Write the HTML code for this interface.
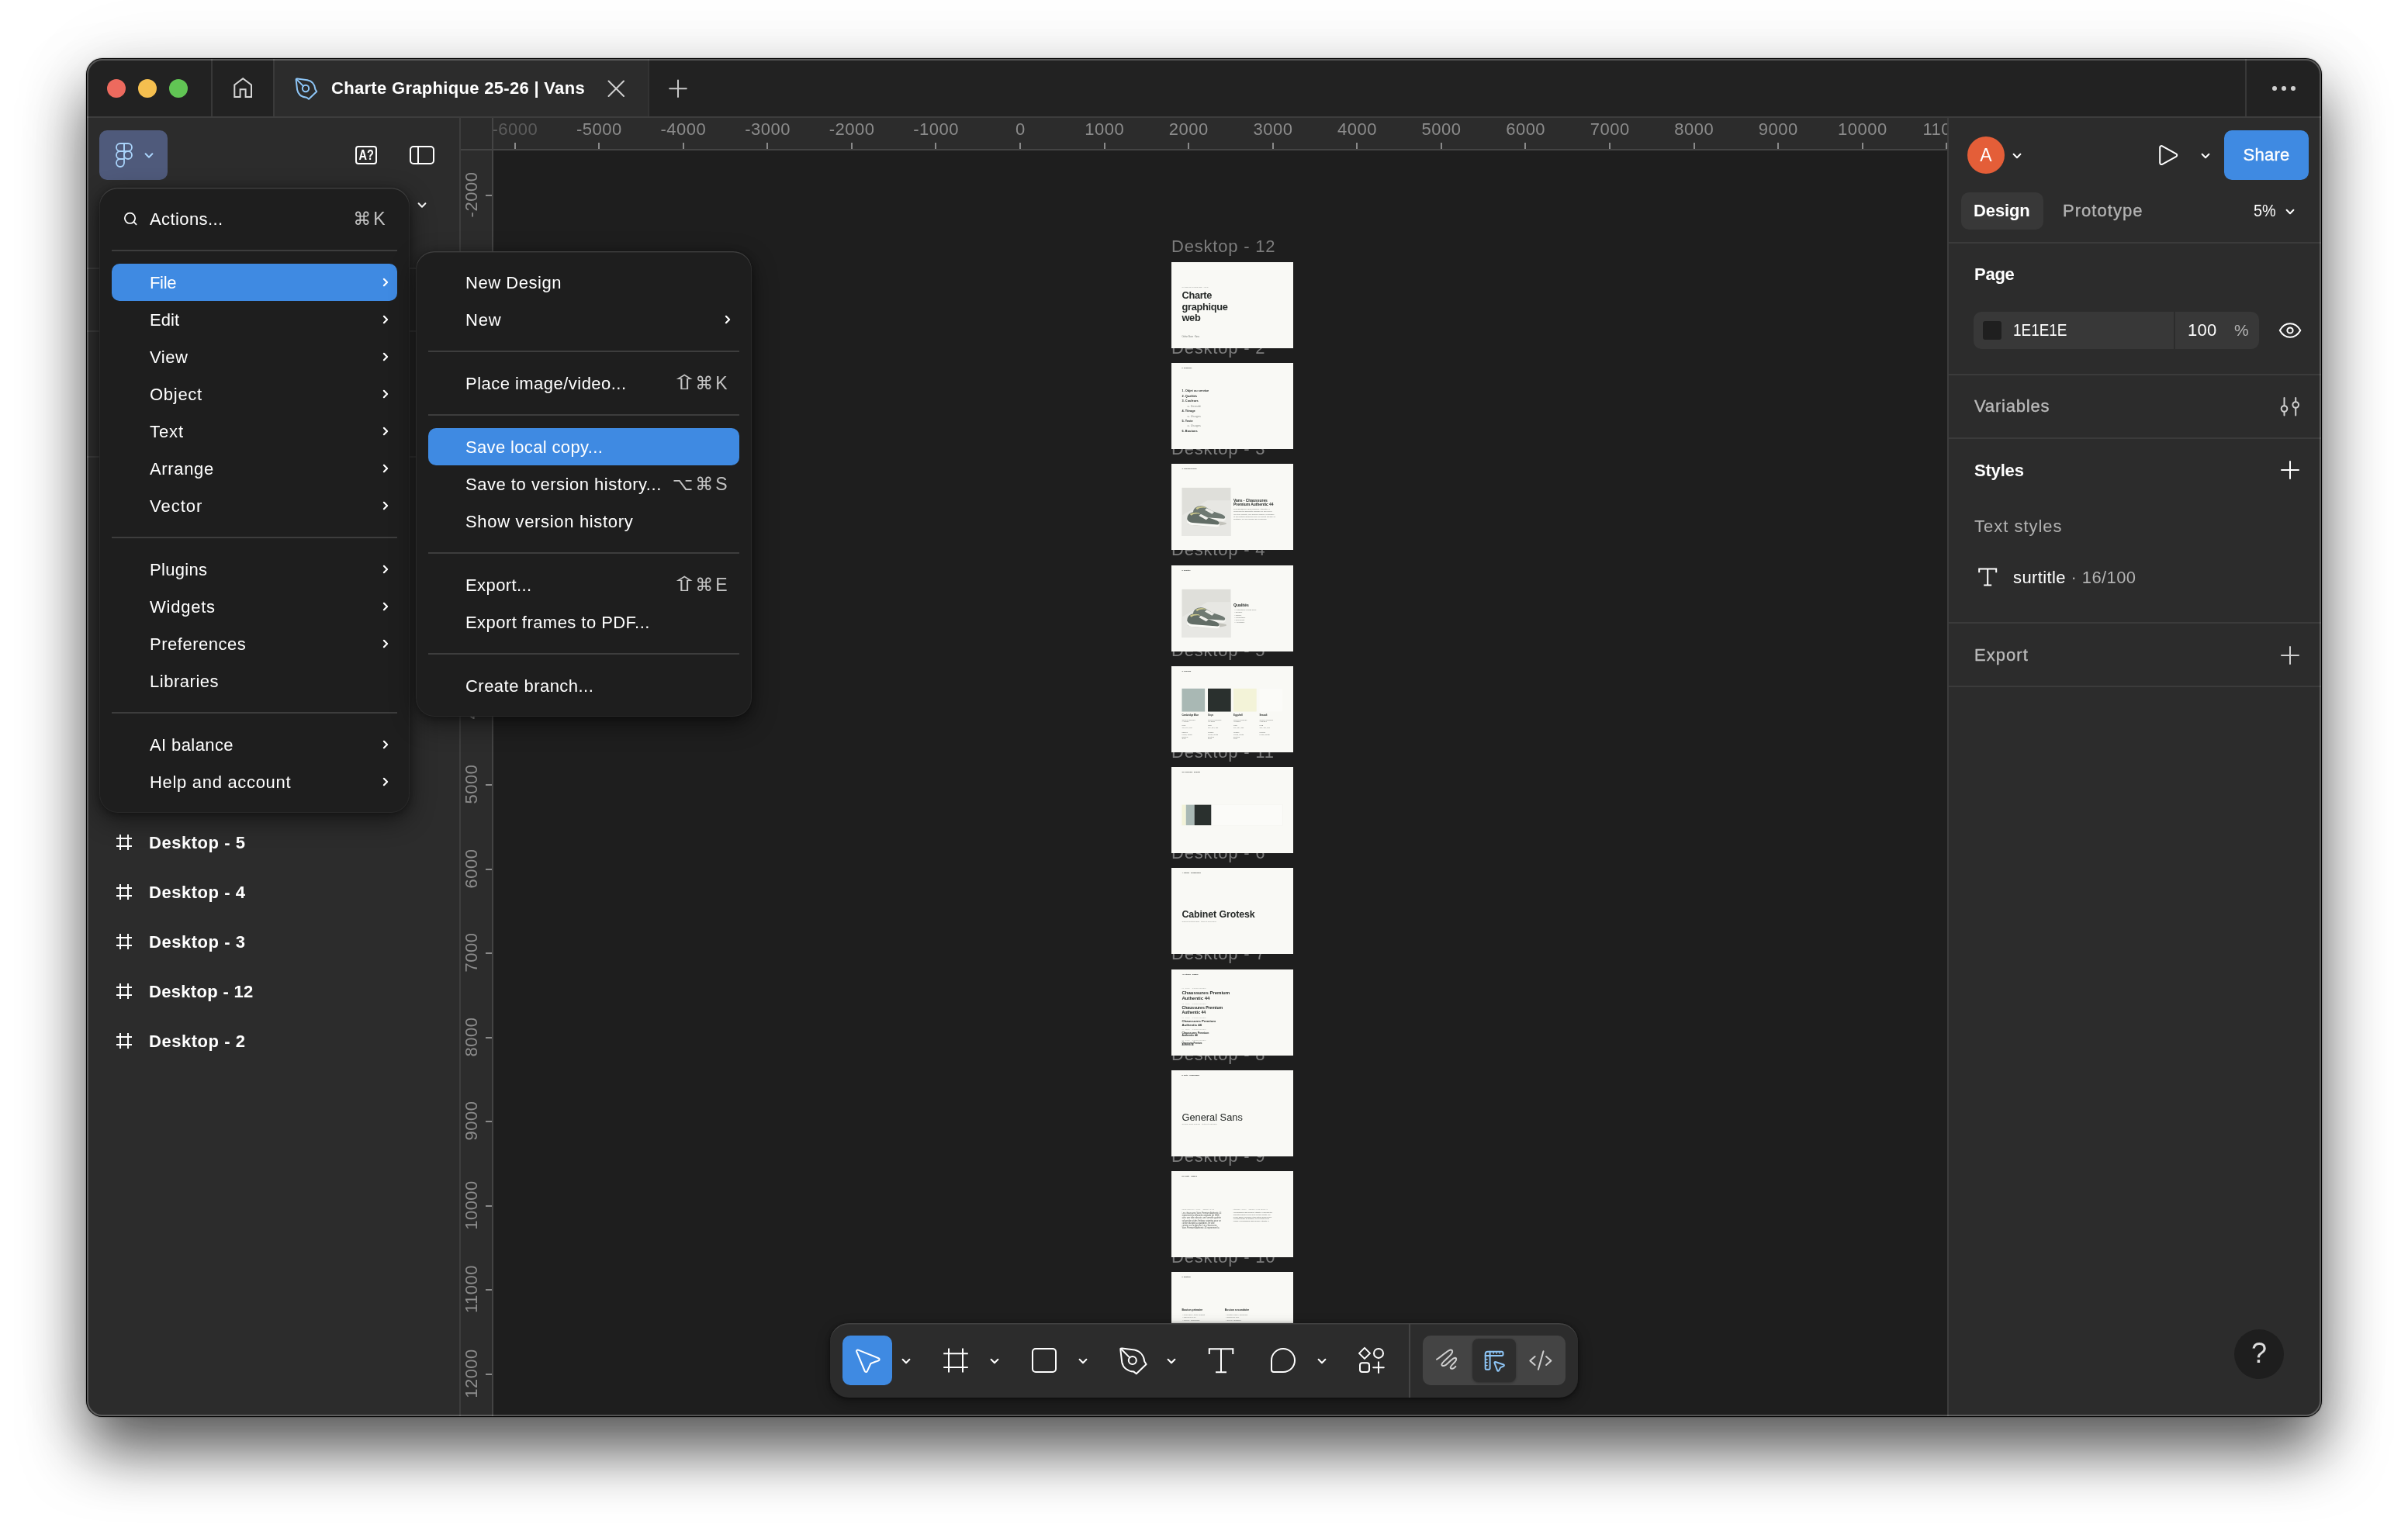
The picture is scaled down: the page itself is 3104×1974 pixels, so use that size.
<!DOCTYPE html>
<html lang="en">
<head>
<meta charset="utf-8">
<title>Charte Graphique 25-26 | Vans – Figma</title>
<style>
*{box-sizing:border-box;margin:0;padding:0}
html,body{width:3104px;height:1974px;overflow:hidden;background:#fff}
body{font-family:"Liberation Sans",sans-serif;font-size:22px;color:#fff;position:relative;-webkit-font-smoothing:antialiased}
.abs,.abs>*{position:absolute}
#shadow{position:absolute;left:111px;top:75px;width:2882px;height:1752px;border-radius:21px;
 box-shadow:0 0 2px rgba(0,0,0,.5),0 44px 78px rgba(0,0,0,.64),0 4px 110px rgba(0,0,0,.07);background:#000}
#win{position:absolute;left:112px;top:76px;width:2880px;height:1750px;border-radius:20px;overflow:hidden;background:#1e1e1e;will-change:transform}
#w{position:absolute;left:-112px;top:-76px;width:3104px;height:1974px}
#w div,#w span,#w svg{position:absolute}
#rim{position:absolute;left:112px;top:76px;width:2880px;height:1750px;border-radius:20px;border:2px solid rgba(255,255,255,.24);pointer-events:none}
.t{white-space:nowrap;line-height:26px;height:26px;letter-spacing:.5px}
.b{font-weight:bold;letter-spacing:.3px}
.g{color:#b3b3b3}
.ln{background:#3d3d3d}

#w i{position:absolute;background:#8a8a8a}
#hr i{top:32px;width:2px;height:8px}
#vr i{left:32px;width:8px;height:2px}
.rl{width:120px;text-align:center;top:2.5px;font-size:22px;line-height:24px;letter-spacing:.5px;color:#8c8c8c;white-space:nowrap;padding-left:.5px}
.rv{left:-46.5px;width:120px;height:24px;text-align:center;font-size:22px;line-height:24px;letter-spacing:.5px;color:#8c8c8c;white-space:nowrap;transform:rotate(-90deg);margin-top:-1px}

.menu{background:#1e1e1e;border-radius:24px;box-shadow:inset 0 1.5px 0 rgba(255,255,255,.11),inset 0 0 0 1px rgba(255,255,255,.05),0 10px 32px rgba(0,0,0,.45),0 2px 10px rgba(0,0,0,.35)}
.sep{height:2px;background:#3d3d3d}
.hl{height:48px;border-radius:10px;background:#3f8ae2}
.sc{text-align:right;color:#c4c4c4;font-family:"Liberation Sans","DejaVu Sans",sans-serif;letter-spacing:3px;font-size:23px}
.fl{color:#7d7d7d;letter-spacing:.8px}
.fr{width:156.4px;height:111.2px;background:#f9f9f5;overflow:hidden}
.fi{left:0;top:0;width:1440px;height:1024px;transform:scale(.10861);transform-origin:0 0}
.s{white-space:nowrap}
#w .u{position:relative;display:inline-block;width:20px;text-align:center;transform:scale(1.8,1.12);letter-spacing:0;margin-right:4px;top:-1px}
svg{overflow:visible}
.ic{fill:none;stroke:#fff;stroke-width:2;stroke-linecap:round;stroke-linejoin:round}
</style>
</head>
<body>
<div id="shadow"></div>
<div id="win"><div id="w">

<!-- ============ TITLE BAR ============ -->
<div id="titlebar" style="left:112px;top:76px;width:2880px;height:76px;background:#222"></div>
<div class="ln" style="left:112px;top:150px;width:2880px;height:2px"></div>

<div style="left:138px;top:102px;width:24px;height:24px;border-radius:50%;background:#ed6a5e"></div>
<div style="left:178px;top:102px;width:24px;height:24px;border-radius:50%;background:#f5bf4f"></div>
<div style="left:218px;top:102px;width:24px;height:24px;border-radius:50%;background:#61c554"></div>
<div class="ln" style="left:272px;top:76px;width:2px;height:74px;background:#383838"></div>
<svg style="left:293px;top:94px" width="40" height="40" viewBox="293 94 40 40"><path class="ic" stroke="#d6d6d6" d="M302.3 125V109.4L313.2 101.2L324 109.4V125H316.6V115.2H309.6V125Z" style="stroke:#d6d6d6;stroke-linejoin:miter"/></svg>
<div class="ln" style="left:352px;top:76px;width:2px;height:74px;background:#3a3a3a"></div>
<div style="left:354px;top:76px;width:482px;height:74px;background:#2c2c2c"></div>
<div style="left:354px;top:150px;width:482px;height:2px;background:#3d3d3d"></div>
<div class="ln" style="left:835px;top:76px;width:2px;height:74px;background:#333"></div>
<svg style="left:374px;top:94px" width="40" height="40" viewBox="374 94 40 40"><g class="ic" style="stroke:#8ec6f7;stroke-width:2.5" transform="translate(394 114) scale(.8) translate(-1459.8 -1754)"><path d="M1446.4 1738.5L1462.5 1740.6C1469.5 1742 1474.5 1747.5 1475.3 1755.5L1477.6 1759L1464.8 1771.2L1461.5 1768.6C1453 1768 1447.5 1763 1446.2 1756.2L1444.4 1740.6Q1444 1738.2 1446.4 1738.5Z"/><circle cx="1459.8" cy="1754" r="5.2"/><path d="M1444.6 1738.8L1456.2 1750.4"/></g></svg>
<div class="t b" style="left:427px;top:101px;letter-spacing:0.31px">Charte Graphique 25-26 | Vans</div>
<svg style="left:774px;top:94px" width="40" height="40" viewBox="774 94 40 40"><path class="ic" style="stroke:#d0d0d0" d="M784.5 104.5L804 124M804 104.5L784.5 124"/></svg>
<svg style="left:854px;top:94px" width="40" height="40" viewBox="854 94 40 40"><path class="ic" style="stroke:#c8c8c8" d="M874 103.5V125M863.2 114.2H884.8"/></svg>
<div class="ln" style="left:2894px;top:76px;width:2px;height:74px;background:#383838"></div>
<div style="left:2929px;top:111px;width:6px;height:6px;border-radius:50%;background:#d0d0d0"></div>
<div style="left:2941px;top:111px;width:6px;height:6px;border-radius:50%;background:#d0d0d0"></div>
<div style="left:2953px;top:111px;width:6px;height:6px;border-radius:50%;background:#d0d0d0"></div>
<!--TITLEBAR-->

<!-- ============ LEFT PANEL ============ -->
<div id="left" style="left:112px;top:152px;width:480px;height:1674px;background:#2c2c2c"></div>
<div class="ln" style="left:592px;top:152px;width:2px;height:1674px"></div>

<div style="left:128px;top:168px;width:88px;height:64px;border-radius:10px;background:#4f5a7b"></div>
<svg style="left:140px;top:180px" width="40" height="40" viewBox="140 180 40 40"><g class="ic" style="stroke:#a9d3fa;stroke-width:1.8"><path d="M160 185H155a5 5 0 0 0 0 10H160Z"/><path d="M160 185H165a5 5 0 0 1 0 10H160Z"/><path d="M160 195H155a5 5 0 0 0 0 10H160Z"/><circle cx="165" cy="200" r="5"/><path d="M160 205H155a5 5 0 1 0 5 5Z"/></g></svg>
<svg style="left:182px;top:190px" width="20" height="20" viewBox="182 190 20 20"><path class="ic" style="stroke:#a9d3fa" d="M187.6 198.3L192 202.7L196.4 198.3"/></svg>
<svg style="left:452px;top:180px" width="40" height="40" viewBox="452 180 40 40"><rect class="ic" x="459" y="189" width="26" height="22" rx="3"/><text x="472.2" y="205.5" transform="translate(0 206.2) scale(1 1.22) translate(0 -205.5)" text-anchor="middle" font-family="Liberation Sans, sans-serif" font-weight="bold" font-size="14.5" fill="#fff">A?</text></svg>
<svg style="left:524px;top:180px" width="40" height="40" viewBox="524 180 40 40"><rect class="ic" x="529" y="189" width="30" height="22" rx="4"/><path class="ic" d="M539 189V211"/></svg>
<svg style="left:534px;top:254px" width="20" height="20" viewBox="534 254 20 20"><path class="ic" d="M539.6 262.3L544 266.7L548.4 262.3"/></svg>
<div class="ln" style="left:112px;top:345px;width:480px;height:2px;background:#3b3b3b"></div>
<div class="ln" style="left:112px;top:426px;width:480px;height:2px;background:#3b3b3b"></div>
<div class="ln" style="left:112px;top:588px;width:480px;height:2px;background:#3b3b3b"></div>
<svg style="left:148px;top:1074px" width="24" height="24" viewBox="0 0 24 24"><path class="ic" style="stroke-linecap:butt" d="M7 2V22M17 2V22M2 7H22M2 17H22"/></svg>
<div class="t b" style="left:192px;top:1074px;letter-spacing:0.53px">Desktop - 5</div>
<svg style="left:148px;top:1138px" width="24" height="24" viewBox="0 0 24 24"><path class="ic" style="stroke-linecap:butt" d="M7 2V22M17 2V22M2 7H22M2 17H22"/></svg>
<div class="t b" style="left:192px;top:1138px;letter-spacing:0.53px">Desktop - 4</div>
<svg style="left:148px;top:1202px" width="24" height="24" viewBox="0 0 24 24"><path class="ic" style="stroke-linecap:butt" d="M7 2V22M17 2V22M2 7H22M2 17H22"/></svg>
<div class="t b" style="left:192px;top:1202px;letter-spacing:0.53px">Desktop - 3</div>
<svg style="left:148px;top:1266px" width="24" height="24" viewBox="0 0 24 24"><path class="ic" style="stroke-linecap:butt" d="M7 2V22M17 2V22M2 7H22M2 17H22"/></svg>
<div class="t b" style="left:192px;top:1266px;letter-spacing:0.32px">Desktop - 12</div>
<svg style="left:148px;top:1330px" width="24" height="24" viewBox="0 0 24 24"><path class="ic" style="stroke-linecap:butt" d="M7 2V22M17 2V22M2 7H22M2 17H22"/></svg>
<div class="t b" style="left:192px;top:1330px;letter-spacing:0.53px">Desktop - 2</div>
<!--LEFT-->

<!-- ============ CANVAS ============ -->
<div id="canvas" style="left:636px;top:194px;width:1874px;height:1632px;background:#1e1e1e;overflow:hidden"><div id="cv" style="left:-636px;top:-194px;width:3104px;height:1974px">
<!--CANVAS_START-->
<div class="t fl" style="left:1510px;top:305.4px">Desktop - 12</div>
<div class="t fl" style="left:1510px;top:435.6px">Desktop - 2</div>
<div class="t fl" style="left:1510px;top:565.9px">Desktop - 3</div>
<div class="t fl" style="left:1510px;top:696.1px">Desktop - 4</div>
<div class="t fl" style="left:1510px;top:826.4px">Desktop - 5</div>
<div class="t fl" style="left:1510px;top:956.6px">Desktop - 11</div>
<div class="t fl" style="left:1510px;top:1086.8px">Desktop - 6</div>
<div class="t fl" style="left:1510px;top:1217.1px">Desktop - 7</div>
<div class="t fl" style="left:1510px;top:1347.3px">Desktop - 8</div>
<div class="t fl" style="left:1510px;top:1477.6px">Desktop - 9</div>
<div class="t fl" style="left:1510px;top:1607.8px">Desktop - 10</div>
<div class="fr" style="left:1510.2px;top:337.8px"><div class="fi"><div class="s" style="left:124px;top:291px;font-size:16px;line-height:19px;font-weight:normal;color:#8a8d8a;letter-spacing:1.5px;">CHARTE GRAPHIQUE WEB — 25-26</div><div class="s" style="left:124px;top:328px;font-size:118px;line-height:132px;font-weight:bold;letter-spacing:-3px;color:#262a28;white-space:normal;width:700px">Charte<br>graphique<br>web</div><div class="s" style="left:124px;top:873px;font-size:24px;line-height:29px;font-weight:normal;color:#6d716e;letter-spacing:0px;">Online Store · Vans</div></div></div>
<div class="fr" style="left:1510.2px;top:468.0px"><div class="fi"><div class="s" style="left:124px;top:47px;font-size:20px;line-height:24px;font-weight:bold;color:#262a28;letter-spacing:0px;">0. Sommaire</div><div class="s" style="left:124px;top:308px;font-size:36px;line-height:43px;font-weight:bold;color:#262a28;letter-spacing:0px;">1. Objet ou service</div><div class="s" style="left:124px;top:370px;font-size:36px;line-height:43px;font-weight:bold;color:#262a28;letter-spacing:0px;">2. Qualités</div><div class="s" style="left:124px;top:429px;font-size:36px;line-height:43px;font-weight:bold;color:#262a28;letter-spacing:0px;">3. Couleurs</div><div class="s" style="left:188px;top:488px;font-size:36px;line-height:43px;font-weight:normal;color:#8a8d8a;letter-spacing:0px;">a. Densité</div><div class="s" style="left:124px;top:548px;font-size:36px;line-height:43px;font-weight:bold;color:#262a28;letter-spacing:0px;">4. Titrage</div><div class="s" style="left:188px;top:607px;font-size:36px;line-height:43px;font-weight:normal;color:#8a8d8a;letter-spacing:0px;">a. Usages</div><div class="s" style="left:124px;top:666px;font-size:36px;line-height:43px;font-weight:bold;color:#262a28;letter-spacing:0px;">5. Texte</div><div class="s" style="left:188px;top:725px;font-size:36px;line-height:43px;font-weight:normal;color:#8a8d8a;letter-spacing:0px;">a. Usages</div><div class="s" style="left:124px;top:787px;font-size:36px;line-height:43px;font-weight:bold;color:#262a28;letter-spacing:0px;">6. Boutons</div></div></div>
<div class="fr" style="left:1510.2px;top:598.3px"><div class="fi"><div class="s" style="left:124px;top:47px;font-size:20px;line-height:24px;font-weight:bold;color:#262a28;letter-spacing:0px;">1. Objet ou service</div><svg style="left:124px;top:284px" width="580" height="572" viewBox="0 0 580 572"><rect width="580" height="572" fill="#dfdfda"/><path d="M0 330L300 150H580V572H0Z" fill="#e7e7e3"/><ellipse cx="300" cy="425" rx="230" ry="30" fill="#c3c3bc"/>
<g transform="translate(40 -20)"><path d="M95 300C100 262 140 238 185 236C215 236 240 246 262 262L330 300C380 322 450 330 470 360C478 378 470 392 450 394L150 372C118 368 96 350 92 325Z" fill="#6e7972"/><path d="M92 325C100 350 125 362 155 366L452 388C468 388 476 378 474 366L478 392C476 408 462 416 444 415L148 394C112 390 92 370 90 345Z" fill="#f5f5f1"/><path d="M125 262C150 244 200 238 232 248L250 262C215 252 165 258 140 280Z" fill="#cdc98f"/><path d="M255 262L345 308L318 332L232 284Z" fill="#eeeeea"/></g>
<g transform="translate(-30 50)"><path d="M95 300C100 262 140 238 185 236C215 236 240 246 262 262L330 300C380 322 450 330 470 360C478 378 470 392 450 394L150 372C118 368 96 350 92 325Z" fill="#626d66"/><path d="M92 325C100 350 125 362 155 366L452 388C468 388 476 378 474 366L478 392C476 408 462 416 444 415L148 394C112 390 92 370 90 345Z" fill="#fafaf6"/><path d="M125 262C150 244 200 238 232 248L250 262C215 252 165 258 140 280Z" fill="#cdc98f"/><path d="M255 262L345 308L318 332L232 284Z" fill="#f1f1ed"/></g></svg><div class="s" style="left:737px;top:405px;font-size:46px;line-height:55px;font-weight:bold;color:#262a28;letter-spacing:-0.5px;">Vans - Chaussures</div><div class="s" style="left:737px;top:457px;font-size:46px;line-height:55px;font-weight:bold;color:#262a28;letter-spacing:-0.5px;">Premium Authentic 44</div><div class="s" style="left:737px;top:520px;width:500px;font-size:22px;line-height:31px;color:#6d716e;white-space:normal;height:217px;overflow:hidden">Les chaussures Vans Premium Authentic 44 reprennent la silhouette originale de 1966 avec une toile robuste, une semelle gaufrée vulcanisée et des finitions soignées pour un confort durable au quotidien, en ville comme sur la planche.</div></div></div>
<div class="fr" style="left:1510.2px;top:728.5px"><div class="fi"><div class="s" style="left:124px;top:47px;font-size:20px;line-height:24px;font-weight:bold;color:#262a28;letter-spacing:0px;">2. Qualités</div><svg style="left:124px;top:284px" width="580" height="572" viewBox="0 0 580 572"><rect width="580" height="572" fill="#dfdfda"/><path d="M0 330L300 150H580V572H0Z" fill="#e7e7e3"/><ellipse cx="300" cy="425" rx="230" ry="30" fill="#c3c3bc"/>
<g transform="translate(40 -20)"><path d="M95 300C100 262 140 238 185 236C215 236 240 246 262 262L330 300C380 322 450 330 470 360C478 378 470 392 450 394L150 372C118 368 96 350 92 325Z" fill="#6e7972"/><path d="M92 325C100 350 125 362 155 366L452 388C468 388 476 378 474 366L478 392C476 408 462 416 444 415L148 394C112 390 92 370 90 345Z" fill="#f5f5f1"/><path d="M125 262C150 244 200 238 232 248L250 262C215 252 165 258 140 280Z" fill="#cdc98f"/><path d="M255 262L345 308L318 332L232 284Z" fill="#eeeeea"/></g>
<g transform="translate(-30 50)"><path d="M95 300C100 262 140 238 185 236C215 236 240 246 262 262L330 300C380 322 450 330 470 360C478 378 470 392 450 394L150 372C118 368 96 350 92 325Z" fill="#626d66"/><path d="M92 325C100 350 125 362 155 366L452 388C468 388 476 378 474 366L478 392C476 408 462 416 444 415L148 394C112 390 92 370 90 345Z" fill="#fafaf6"/><path d="M125 262C150 244 200 238 232 248L250 262C215 252 165 258 140 280Z" fill="#cdc98f"/><path d="M255 262L345 308L318 332L232 284Z" fill="#f1f1ed"/></g></svg><div class="s" style="left:737px;top:444px;font-size:46px;line-height:55px;font-weight:bold;color:#262a28;letter-spacing:0px;">Qualités</div><div class="s" style="left:750px;top:515px;font-size:22px;line-height:26px;font-weight:normal;color:#6d716e;letter-spacing:0px;">• Authentique depuis 1966</div><div class="s" style="left:750px;top:545px;font-size:22px;line-height:26px;font-weight:normal;color:#6d716e;letter-spacing:0px;">• Durable</div><div class="s" style="left:750px;top:575px;font-size:22px;line-height:26px;font-weight:normal;color:#6d716e;letter-spacing:0px;">• Simple</div><div class="s" style="left:750px;top:605px;font-size:22px;line-height:26px;font-weight:normal;color:#6d716e;letter-spacing:0px;">• Confortable</div><div class="s" style="left:750px;top:635px;font-size:22px;line-height:26px;font-weight:normal;color:#6d716e;letter-spacing:0px;">• Polyvalent</div><div class="s" style="left:750px;top:665px;font-size:22px;line-height:26px;font-weight:normal;color:#6d716e;letter-spacing:0px;">• Accessible</div></div></div>
<div class="fr" style="left:1510.2px;top:858.8px"><div class="fi"><div class="s" style="left:124px;top:47px;font-size:20px;line-height:24px;font-weight:bold;color:#262a28;letter-spacing:0px;">3. Couleurs</div><div class="s" style="left:124px;top:265px;width:273px;height:274px;background:#a9b8b4"></div><div class="s" style="left:124px;top:561px;font-size:26px;line-height:31px;font-weight:bold;color:#262a28;letter-spacing:0px;">Cambridge Blue</div><div class="s" style="left:124px;top:622px;font-size:20px;line-height:24px;font-weight:normal;color:#6d716e;letter-spacing:0px;">Couleur principale</div><div class="s" style="left:124px;top:648px;font-size:20px;line-height:24px;font-weight:normal;color:#6d716e;letter-spacing:0px;">#A9B8B4</div><div class="s" style="left:124px;top:694px;font-size:20px;line-height:24px;font-weight:normal;color:#6d716e;letter-spacing:0px;">RGB</div><div class="s" style="left:124px;top:722px;font-size:20px;line-height:24px;font-weight:normal;color:#6d716e;letter-spacing:0px;">169, 184, 180</div><div class="s" style="left:124px;top:771px;font-size:20px;line-height:24px;font-weight:normal;color:#6d716e;letter-spacing:0px;">Usages</div><div class="s" style="left:124px;top:800px;font-size:20px;line-height:24px;font-weight:normal;color:#6d716e;letter-spacing:0px;">Fonds, aplats</div><div class="s" style="left:124px;top:825px;font-size:20px;line-height:24px;font-weight:normal;color:#6d716e;letter-spacing:0px;">Boutons</div><div class="s" style="left:124px;top:850px;font-size:20px;line-height:24px;font-weight:normal;color:#6d716e;letter-spacing:0px;">Texte</div><div class="s" style="left:433px;top:265px;width:273px;height:274px;background:#2a302e"></div><div class="s" style="left:433px;top:561px;font-size:26px;line-height:31px;font-weight:bold;color:#262a28;letter-spacing:0px;">Onyx</div><div class="s" style="left:433px;top:622px;font-size:20px;line-height:24px;font-weight:normal;color:#6d716e;letter-spacing:0px;">Couleur principale</div><div class="s" style="left:433px;top:648px;font-size:20px;line-height:24px;font-weight:normal;color:#6d716e;letter-spacing:0px;">#2A302E</div><div class="s" style="left:433px;top:694px;font-size:20px;line-height:24px;font-weight:normal;color:#6d716e;letter-spacing:0px;">RGB</div><div class="s" style="left:433px;top:722px;font-size:20px;line-height:24px;font-weight:normal;color:#6d716e;letter-spacing:0px;">169, 184, 180</div><div class="s" style="left:433px;top:771px;font-size:20px;line-height:24px;font-weight:normal;color:#6d716e;letter-spacing:0px;">Usages</div><div class="s" style="left:433px;top:800px;font-size:20px;line-height:24px;font-weight:normal;color:#6d716e;letter-spacing:0px;">Fonds, aplats</div><div class="s" style="left:433px;top:825px;font-size:20px;line-height:24px;font-weight:normal;color:#6d716e;letter-spacing:0px;">Boutons</div><div class="s" style="left:433px;top:850px;font-size:20px;line-height:24px;font-weight:normal;color:#6d716e;letter-spacing:0px;">Texte</div><div class="s" style="left:737px;top:265px;width:273px;height:274px;background:#f3f3d8"></div><div class="s" style="left:737px;top:561px;font-size:26px;line-height:31px;font-weight:bold;color:#262a28;letter-spacing:0px;">Eggshell</div><div class="s" style="left:737px;top:622px;font-size:20px;line-height:24px;font-weight:normal;color:#6d716e;letter-spacing:0px;">Couleur principale</div><div class="s" style="left:737px;top:648px;font-size:20px;line-height:24px;font-weight:normal;color:#6d716e;letter-spacing:0px;">#F3F3D8</div><div class="s" style="left:737px;top:694px;font-size:20px;line-height:24px;font-weight:normal;color:#6d716e;letter-spacing:0px;">RGB</div><div class="s" style="left:737px;top:722px;font-size:20px;line-height:24px;font-weight:normal;color:#6d716e;letter-spacing:0px;">169, 184, 180</div><div class="s" style="left:737px;top:771px;font-size:20px;line-height:24px;font-weight:normal;color:#6d716e;letter-spacing:0px;">Usages</div><div class="s" style="left:737px;top:800px;font-size:20px;line-height:24px;font-weight:normal;color:#6d716e;letter-spacing:0px;">Fonds, aplats</div><div class="s" style="left:737px;top:825px;font-size:20px;line-height:24px;font-weight:normal;color:#6d716e;letter-spacing:0px;">Boutons</div><div class="s" style="left:737px;top:850px;font-size:20px;line-height:24px;font-weight:normal;color:#6d716e;letter-spacing:0px;">Texte</div><div class="s" style="left:1046px;top:265px;width:273px;height:274px;background:#fbfbf8"></div><div class="s" style="left:1046px;top:561px;font-size:26px;line-height:31px;font-weight:bold;color:#262a28;letter-spacing:0px;">Seasalt</div><div class="s" style="left:1046px;top:622px;font-size:20px;line-height:24px;font-weight:normal;color:#6d716e;letter-spacing:0px;">Couleur principale</div><div class="s" style="left:1046px;top:648px;font-size:20px;line-height:24px;font-weight:normal;color:#6d716e;letter-spacing:0px;">#FBFBF8</div><div class="s" style="left:1046px;top:694px;font-size:20px;line-height:24px;font-weight:normal;color:#6d716e;letter-spacing:0px;">RGB</div><div class="s" style="left:1046px;top:722px;font-size:20px;line-height:24px;font-weight:normal;color:#6d716e;letter-spacing:0px;">169, 184, 180</div><div class="s" style="left:1046px;top:771px;font-size:20px;line-height:24px;font-weight:normal;color:#6d716e;letter-spacing:0px;">Usages</div><div class="s" style="left:1046px;top:800px;font-size:20px;line-height:24px;font-weight:normal;color:#6d716e;letter-spacing:0px;">Fonds, aplats</div></div></div>
<div class="fr" style="left:1510.2px;top:989.0px"><div class="fi"><div class="s" style="left:124px;top:47px;font-size:20px;line-height:24px;font-weight:bold;color:#262a28;letter-spacing:0px;">3.a. Couleurs - Densité</div><div class="s" style="left:124px;top:448px;width:1193px;height:243px;background:#fbfbf8;box-shadow:0 0 0 4px #f1f1ec"></div><div class="s" style="left:124px;top:448px;width:49px;height:243px;background:#f3f3d8"></div><div class="s" style="left:173px;top:448px;width:100px;height:243px;background:#a9b8b4"></div><div class="s" style="left:273px;top:448px;width:199px;height:243px;background:#2a302e"></div></div></div>
<div class="fr" style="left:1510.2px;top:1119.2px"><div class="fi"><div class="s" style="left:124px;top:47px;font-size:20px;line-height:24px;font-weight:bold;color:#262a28;letter-spacing:0px;">4. Titrage - Typographie</div><div class="s" style="left:124px;top:480px;font-size:114px;line-height:137px;font-weight:bold;color:#262a28;letter-spacing:-1px;">Cabinet Grotesk</div><div class="s" style="left:124px;top:621px;font-size:22px;line-height:26px;font-weight:normal;color:#8a8d8a;letter-spacing:0px;">Cabinet Grotesk Bold · titres et accroches</div></div></div>
<div class="fr" style="left:1510.2px;top:1249.5px"><div class="fi"><div class="s" style="left:124px;top:47px;font-size:20px;line-height:24px;font-weight:bold;color:#262a28;letter-spacing:0px;">4.a. Titrage - Usages</div><div class="s" style="left:124px;top:219px;font-size:16px;line-height:19px;font-weight:normal;color:#a5a8a5;letter-spacing:1px;">H1 · 56/110 — CABINET GROTESK</div><div class="s" style="left:124px;top:244px;font-size:56px;line-height:67px;font-weight:bold;color:#262a28;letter-spacing:-0.5px;">Chaussures Premium</div><div class="s" style="left:124px;top:306px;font-size:56px;line-height:67px;font-weight:bold;color:#262a28;letter-spacing:-0.5px;">Authentic 44</div><div class="s" style="left:124px;top:400px;font-size:16px;line-height:19px;font-weight:normal;color:#a5a8a5;letter-spacing:1px;">H2 · 48/110 — CABINET GROTESK</div><div class="s" style="left:124px;top:425px;font-size:48px;line-height:58px;font-weight:bold;color:#262a28;letter-spacing:-0.5px;">Chaussures Premium</div><div class="s" style="left:124px;top:479px;font-size:48px;line-height:58px;font-weight:bold;color:#262a28;letter-spacing:-0.5px;">Authentic 44</div><div class="s" style="left:124px;top:567px;font-size:16px;line-height:19px;font-weight:normal;color:#a5a8a5;letter-spacing:1px;">H3 · 40/110 — CABINET GROTESK</div><div class="s" style="left:124px;top:589px;font-size:40px;line-height:48px;font-weight:bold;color:#262a28;letter-spacing:-0.5px;">Chaussures Premium</div><div class="s" style="left:124px;top:631px;font-size:40px;line-height:48px;font-weight:bold;color:#262a28;letter-spacing:-0.5px;">Authentic 44</div><div class="s" style="left:124px;top:704px;font-size:16px;line-height:19px;font-weight:normal;color:#a5a8a5;letter-spacing:1px;">H4 · 32/110 — CABINET GROTESK</div><div class="s" style="left:124px;top:731px;font-size:32px;line-height:38px;font-weight:bold;color:#262a28;letter-spacing:-0.5px;">Chaussures Premium</div><div class="s" style="left:124px;top:765px;font-size:32px;line-height:38px;font-weight:bold;color:#262a28;letter-spacing:-0.5px;">Authentic 44</div><div class="s" style="left:124px;top:828px;font-size:16px;line-height:19px;font-weight:normal;color:#a5a8a5;letter-spacing:1px;">H5 · 24/110 — CABINET GROTESK</div><div class="s" style="left:124px;top:857px;font-size:24px;line-height:29px;font-weight:bold;color:#262a28;letter-spacing:-0.5px;">Chaussures Premium</div><div class="s" style="left:124px;top:883px;font-size:24px;line-height:29px;font-weight:bold;color:#262a28;letter-spacing:-0.5px;">Authentic 44</div></div></div>
<div class="fr" style="left:1510.2px;top:1379.7px"><div class="fi"><div class="s" style="left:124px;top:47px;font-size:20px;line-height:24px;font-weight:bold;color:#262a28;letter-spacing:0px;">5. Texte - Typographie</div><div class="s" style="left:124px;top:485px;font-size:118px;line-height:142px;font-weight:normal;color:#262a28;letter-spacing:0px;">General Sans</div><div class="s" style="left:124px;top:626px;font-size:22px;line-height:26px;font-weight:normal;color:#8a8d8a;letter-spacing:0px;">General Sans Regular · textes et légendes</div></div></div>
<div class="fr" style="left:1510.2px;top:1510.0px"><div class="fi"><div class="s" style="left:124px;top:47px;font-size:20px;line-height:24px;font-weight:bold;color:#262a28;letter-spacing:0px;">5.a. Texte - Usages</div><div class="s" style="left:124px;top:447px;font-size:16px;line-height:19px;font-weight:normal;color:#a5a8a5;letter-spacing:1px;">TEXTE COURANT · 24/130 — GENERAL SANS</div><div class="s" style="left:124px;top:482px;width:470px;font-size:24px;line-height:30px;color:#4d514e;white-space:normal;height:210px;overflow:hidden">Les chaussures Vans Premium Authentic 44 reprennent la silhouette originale de 1966 avec une toile robuste, une semelle gaufrée vulcanisée et des finitions soignées pour un confort durable au quotidien, en ville comme sur la planche. Les chaussures Vans Premium Authentic 44 reprennent la silhouette originale de 1966 avec une toile robuste, une semelle gaufrée vulcanisée et des finitions soignées pour un confort durable au quotidien, en ville comme sur la planche.</div><div class="s" style="left:733px;top:447px;font-size:16px;line-height:19px;font-weight:normal;color:#a5a8a5;letter-spacing:1px;">LÉGENDE · 18/130 — GENERAL SANS REGULAR</div><div class="s" style="left:733px;top:482px;width:480px;font-size:18px;line-height:24px;color:#4d514e;white-space:normal;height:120px;overflow:hidden">Les chaussures Vans Premium Authentic 44 reprennent la silhouette originale de 1966 avec une toile robuste, une semelle gaufrée vulcanisée et des finitions soignées pour un confort durable au quotidien, en ville comme sur la planche. Les chaussures Vans Premium Authentic 44 reprennent la silhouette originale de 1966 avec une toile robuste, une semelle gaufrée vulcanisée et des finitions soignées pour un confort durable au quotidien, en ville comme sur la planche.</div></div></div>
<div class="fr" style="left:1510.2px;top:1640.2px"><div class="fi"><div class="s" style="left:124px;top:47px;font-size:20px;line-height:24px;font-weight:bold;color:#262a28;letter-spacing:0px;">6. Boutons</div><div class="s" style="left:124px;top:432px;font-size:32px;line-height:38px;font-weight:bold;color:#262a28;letter-spacing:0px;">Bouton primaire</div><div class="s" style="left:633px;top:432px;font-size:32px;line-height:38px;font-weight:bold;color:#262a28;letter-spacing:0px;">Bouton secondaire</div><div class="s" style="left:134px;top:497px;font-size:22px;line-height:26px;font-weight:normal;color:#6d716e;letter-spacing:0px;">• Fond Onyx, texte Seasalt</div><div class="s" style="left:647px;top:497px;font-size:22px;line-height:26px;font-weight:normal;color:#6d716e;letter-spacing:0px;">• Contour Onyx, sans fond</div><div class="s" style="left:134px;top:527px;font-size:22px;line-height:26px;font-weight:normal;color:#6d716e;letter-spacing:0px;">• Rayon de 8 px</div><div class="s" style="left:647px;top:527px;font-size:22px;line-height:26px;font-weight:normal;color:#6d716e;letter-spacing:0px;">• Rayon de 8 px</div><div class="s" style="left:134px;top:557px;font-size:22px;line-height:26px;font-weight:normal;color:#6d716e;letter-spacing:0px;">• Survol : Cambridge</div><div class="s" style="left:647px;top:557px;font-size:22px;line-height:26px;font-weight:normal;color:#6d716e;letter-spacing:0px;">• Survol : Eggshell</div></div></div>
<!--CANVAS_END-->
<!--CANVAS-->
</div></div>

<!-- ============ RULERS ============ -->

<div style="left:594px;top:152px;width:1916px;height:40px;background:#2c2c2c"></div>
<div class="ln" style="left:594px;top:192px;width:1916px;height:2px;background:#444"></div>
<div style="left:594px;top:194px;width:40px;height:1632px;background:#2c2c2c"></div>
<div class="ln" style="left:634px;top:152px;width:2px;height:1674px;background:#444"></div>
<div id="hr" style="left:636px;top:152px;width:1874px;height:40px;overflow:hidden">
<span class="rl" style="left:-32.4px;color:#5c5c5c">-6000</span><i style="left:26.6px"></i>
<span class="rl" style="left:76.1px;color:#8c8c8c">-5000</span><i style="left:135.1px"></i>
<span class="rl" style="left:184.7px;color:#8c8c8c">-4000</span><i style="left:243.7px"></i>
<span class="rl" style="left:293.3px;color:#8c8c8c">-3000</span><i style="left:352.3px"></i>
<span class="rl" style="left:401.9px;color:#8c8c8c">-2000</span><i style="left:460.9px"></i>
<span class="rl" style="left:510.4px;color:#8c8c8c">-1000</span><i style="left:569.4px"></i>
<span class="rl" style="left:619.0px;color:#8c8c8c">0</span><i style="left:678.0px"></i>
<span class="rl" style="left:727.6px;color:#8c8c8c">1000</span><i style="left:786.6px"></i>
<span class="rl" style="left:836.1px;color:#8c8c8c">2000</span><i style="left:895.1px"></i>
<span class="rl" style="left:944.7px;color:#8c8c8c">3000</span><i style="left:1003.7px"></i>
<span class="rl" style="left:1053.3px;color:#8c8c8c">4000</span><i style="left:1112.3px"></i>
<span class="rl" style="left:1161.8px;color:#8c8c8c">5000</span><i style="left:1220.8px"></i>
<span class="rl" style="left:1270.4px;color:#8c8c8c">6000</span><i style="left:1329.4px"></i>
<span class="rl" style="left:1379.0px;color:#8c8c8c">7000</span><i style="left:1438.0px"></i>
<span class="rl" style="left:1487.6px;color:#8c8c8c">8000</span><i style="left:1546.6px"></i>
<span class="rl" style="left:1596.1px;color:#8c8c8c">9000</span><i style="left:1655.1px"></i>
<span class="rl" style="left:1704.7px;color:#8c8c8c">10000</span><i style="left:1763.7px"></i>
<span class="rl" style="left:1813.3px;color:#8c8c8c">11000</span><i style="left:1872.3px"></i>
</div>
<div id="vr" style="left:594px;top:194px;width:40px;height:1632px;overflow:hidden">
<span class="rv" style="top:46.0px">-2000</span><i style="top:57.0px"></i>
<span class="rv" style="top:154.6px">-1000</span><i style="top:165.6px"></i>
<span class="rv" style="top:263.1px">0</span><i style="top:274.1px"></i>
<span class="rv" style="top:371.7px">1000</span><i style="top:382.7px"></i>
<span class="rv" style="top:480.3px">2000</span><i style="top:491.3px"></i>
<span class="rv" style="top:588.9px">3000</span><i style="top:599.9px"></i>
<span class="rv" style="top:697.4px">4000</span><i style="top:708.4px"></i>
<span class="rv" style="top:806.0px">5000</span><i style="top:817.0px"></i>
<span class="rv" style="top:914.6px">6000</span><i style="top:925.6px"></i>
<span class="rv" style="top:1023.1px">7000</span><i style="top:1034.1px"></i>
<span class="rv" style="top:1131.7px">8000</span><i style="top:1142.7px"></i>
<span class="rv" style="top:1240.3px">9000</span><i style="top:1251.3px"></i>
<span class="rv" style="top:1348.8px">10000</span><i style="top:1359.8px"></i>
<span class="rv" style="top:1457.4px">11000</span><i style="top:1468.4px"></i>
<span class="rv" style="top:1566.0px">12000</span><i style="top:1577.0px"></i>
</div>
<!--RULERS-->

<!-- ============ RIGHT PANEL ============ -->
<div id="right" style="left:2512px;top:152px;width:480px;height:1674px;background:#2c2c2c"></div>
<div class="ln" style="left:2510px;top:152px;width:2px;height:1674px"></div>

<div style="left:2536px;top:176px;width:48px;height:48px;border-radius:50%;background:#e45e38"></div>
<div class="t" style="left:2536px;top:187px;width:48px;text-align:center;font-size:23px;letter-spacing:0">A</div>
<svg style="left:2590px;top:190.5px" width="20" height="20" viewBox="2590 190.5 20 20"><path class="ic" style="stroke:#fff" d="M2595.6 198.3L2600 202.7L2604.4 198.3"/></svg>
<svg style="left:2775px;top:180px" width="40" height="40" viewBox="2775 180 40 40"><path class="ic" d="M2784.2 190a2 2 0 0 1 3-1.7l18 10a2 2 0 0 1 0 3.5l-18 10a2 2 0 0 1-3-1.7Z"/></svg>
<svg style="left:2832.5px;top:190.5px" width="20" height="20" viewBox="2832.5 190.5 20 20"><path class="ic" style="stroke:#fff" d="M2838.1 198.3L2842.5 202.7L2846.9 198.3"/></svg>

<div style="left:2867px;top:168px;width:109px;height:64px;border-radius:10px;background:#3f8ae2"></div>
<div class="t" style="left:2867px;top:187px;width:109px;text-align:center;letter-spacing:0.22px;-webkit-text-stroke:.35px currentColor">Share</div>
<div style="left:2528px;top:248px;width:106px;height:48px;border-radius:10px;background:#383838"></div>
<div class="t b" style="left:2544px;top:259px;letter-spacing:0;letter-spacing:-0.11px">Design</div>
<div class="t g" style="left:2659px;top:259px;letter-spacing:1.03px;-webkit-text-stroke:.35px currentColor">Prototype</div>
<div class="t" style="left:2905px;top:259px;letter-spacing:0;transform:scaleX(.9);transform-origin:0 50%">5%</div>
<svg style="left:2942px;top:262.5px" width="20" height="20" viewBox="2942 262.5 20 20"><path class="ic" style="stroke:#fff" d="M2947.6 270.3L2952 274.7L2956.4 270.3"/></svg>

<div class="ln" style="left:2512px;top:312px;width:480px;height:2px;background:#3b3b3b"></div>
<div class="t b" style="left:2545px;top:341px;letter-spacing:-0.26px">Page</div>
<div style="left:2544px;top:402px;width:368px;height:48px;border-radius:10px;background:#383838"></div>
<div style="left:2802px;top:402px;width:2px;height:48px;background:#2c2c2c"></div>
<div style="left:2556px;top:414px;width:24px;height:24px;border-radius:3px;background:#1f1f1f"></div>
<div class="t" style="left:2595px;top:413px;letter-spacing:0;transform:scaleX(.86);transform-origin:0 50%">1E1E1E</div>
<div class="t" style="left:2820px;top:413px;letter-spacing:0.24px">100</div>
<div class="t g" style="left:2880px;top:413px;letter-spacing:0;font-size:21px">%</div>
<svg style="left:2932px;top:406px" width="40" height="40" viewBox="2932 406 40 40"><path class="ic" d="M2938.8 426C2942 420.2 2946.6 417.3 2952 417.3S2962 420.2 2965.3 426C2962 431.8 2957.4 434.7 2952 434.7S2942 431.8 2938.8 426Z"/><circle class="ic" cx="2952" cy="426" r="3.6"/></svg>
<div class="ln" style="left:2512px;top:482px;width:480px;height:2px;background:#3b3b3b"></div>
<div class="t" style="left:2545px;top:511px;color:#bababa;letter-spacing:0.8px;-webkit-text-stroke:.35px currentColor">Variables</div>
<svg style="left:2932px;top:504px" width="40" height="40" viewBox="2932 504 40 40"><g class="ic" style="stroke:#cfcfcf"><path d="M2944.5 513V523M2944.5 531V535.5M2959.2 513V518M2959.2 526V535.5"/><circle cx="2944.5" cy="527" r="3.8"/><circle cx="2959.2" cy="522" r="3.8"/></g></svg>
<div class="ln" style="left:2512px;top:564px;width:480px;height:2px;background:#3b3b3b"></div>
<div class="t b" style="left:2545px;top:594px;letter-spacing:-0.19px">Styles</div>
<svg style="left:2938px;top:592px" width="28" height="28" viewBox="2938 592 28 28"><path class="ic" style="stroke:#fff" d="M2952 595V617M2941 606H2963"/></svg>

<div class="t g" style="left:2545px;top:666px;letter-spacing:0.99px">Text styles</div>
<svg style="left:2546px;top:727px" width="32" height="32" viewBox="2546 727 32 32"><path class="ic" style="stroke-linecap:butt;stroke-linejoin:miter" d="M2551.2 738.2V733.6H2573.2V738.2M2562.2 733.6V754.6M2557.2 754.6H2567.2"/></svg>
<div class="t" style="left:2595px;top:732px;letter-spacing:.4px">surtitle<span class="g" style="position:static"> · 16/100</span></div>
<div class="ln" style="left:2512px;top:802px;width:480px;height:2px;background:#3b3b3b"></div>
<div class="t" style="left:2545px;top:832px;color:#bababa;letter-spacing:1.04px;-webkit-text-stroke:.35px currentColor">Export</div>
<svg style="left:2938px;top:830.5px" width="28" height="28" viewBox="2938 830.5 28 28"><path class="ic" style="stroke:#cfcfcf" d="M2952 833.5V855.5M2941 844.5H2963"/></svg>

<div class="ln" style="left:2512px;top:884px;width:480px;height:2px;background:#3b3b3b"></div>
<div style="left:2880px;top:1714px;width:64px;height:64px;border-radius:50%;background:#1e1e1e"></div>
<div class="t" style="left:2880px;top:1727px;width:64px;text-align:center;font-size:36px;line-height:36px;height:36px;letter-spacing:0;color:#dcdcdc">?</div>
<!--RIGHT-->

<!-- ============ TOOLBAR ============ -->

<div style="left:1070px;top:1706px;width:964px;height:96px;border-radius:24px;background:#2c2c2c;box-shadow:inset 0 1.5px 0 rgba(255,255,255,.11),0 1px 5px rgba(0,0,0,.5),0 6px 18px rgba(0,0,0,.3)"></div>
<div style="left:1086px;top:1722px;width:64px;height:64px;border-radius:10px;background:#3f8ae2"></div>
<svg style="left:1070px;top:1706px" width="964" height="96" viewBox="1070 1706 964 96">
<g class="ic">
<path d="M1104.2 1742.6a1.6 1.6 0 0 1 2.1-2l26.3 10.6a1.6 1.6 0 0 1 0 3l-9.4 3.6a2 2 0 0 0-1.1 1l-4.3 9.3a1.6 1.6 0 0 1-3-.1Z"/>
<path style="stroke-linecap:butt" d="M1223 1738.5V1769.5M1241 1738.5V1769.5M1216.2 1745.2H1247.8M1216.2 1763H1247.8"/>
<rect x="1331" y="1739" width="30" height="30" rx="4"/>
<path d="M1446.4 1738.5L1462.5 1740.6C1469.5 1742 1474.5 1747.5 1475.3 1755.5L1477.6 1759L1464.8 1771.2L1461.5 1768.6C1453 1768 1447.5 1763 1446.2 1756.2L1444.4 1740.6Q1444 1738.2 1446.4 1738.5Z"/><circle cx="1459.8" cy="1754" r="5"/><path d="M1444.6 1738.8L1456.2 1750.4"/>
<path style="stroke-linecap:butt;stroke-linejoin:miter" d="M1558.8 1746V1739.2H1589.3V1746M1574 1739.2V1769.2M1567 1769.2H1581"/>
<path d="M1639 1754a15 15 0 1 1 15 15H1642a3 3 0 0 1-3-3Z"/>
<path d="M1759 1737.9L1766 1744.9L1759 1751.9L1752 1744.9Z"/><circle cx="1777" cy="1744.9" r="6"/><rect x="1753" y="1757.3" width="12" height="11.7" rx="3"/><path d="M1777 1756.3V1770M1770.2 1763.2H1783.8"/>
</g>
</svg>
<svg style="left:1158px;top:1745px" width="20" height="20" viewBox="1158 1745 20 20"><path class="ic" style="stroke:#fff" d="M1163.6 1752.8L1168 1757.2L1172.4 1752.8"/></svg>
<svg style="left:1272px;top:1745px" width="20" height="20" viewBox="1272 1745 20 20"><path class="ic" style="stroke:#fff" d="M1277.6 1752.8L1282 1757.2L1286.4 1752.8"/></svg>
<svg style="left:1386px;top:1745px" width="20" height="20" viewBox="1386 1745 20 20"><path class="ic" style="stroke:#fff" d="M1391.6 1752.8L1396 1757.2L1400.4 1752.8"/></svg>
<svg style="left:1500px;top:1745px" width="20" height="20" viewBox="1500 1745 20 20"><path class="ic" style="stroke:#fff" d="M1505.6 1752.8L1510 1757.2L1514.4 1752.8"/></svg>
<svg style="left:1694px;top:1745px" width="20" height="20" viewBox="1694 1745 20 20"><path class="ic" style="stroke:#fff" d="M1699.6 1752.8L1704 1757.2L1708.4 1752.8"/></svg>

<div style="left:1816px;top:1706px;width:2px;height:96px;background:#444"></div>
<div style="left:1834px;top:1722px;width:184px;height:64px;border-radius:10px;background:#444"></div>
<div style="left:1898px;top:1726px;width:56px;height:56px;border-radius:8px;background:#2e2e2e;box-shadow:0 1px 3px rgba(0,0,0,.3)"></div>
<svg style="left:1834px;top:1722px" width="184" height="64" viewBox="1834 1722 184 64">
<g class="ic" style="stroke:#cfcfcf"><path d="M1852.1 1752.7C1857.8 1749.7 1865.7 1740.8 1869.7 1740.4C1872.7 1740.2 1872.7 1742.8 1871.2 1745.3C1867.7 1750.7 1857.8 1756.7 1858.4 1759.7C1858.8 1762.2 1862.8 1761.2 1865.7 1758.2C1869.2 1755.2 1873.2 1750.7 1875.7 1750.8C1877.9 1751.0 1877.4 1753.7 1875.7 1755.7C1873.2 1758.7 1869.2 1761.7 1869.7 1763.6C1870.2 1765.6 1873.7 1765.1 1876.4 1761.9"/>
<path d="M1978.6 1749L1972.3 1754.4L1978.6 1760M1989.5 1742.3L1982.9 1765.7M1993.1 1749L1999.4 1754.4L1993.1 1760"/></g>
<g class="ic" style="stroke:#8ec6f7"><path d="M1917.7 1742.8H1936a1.5 1.5 0 0 1 1.5 1.5V1746.5a1.5 1.5 0 0 1-1.5 1.5H1920.6V1764.2a1.5 1.5 0 0 1-1.5 1.5H1916.2a1.5 1.5 0 0 1-1.5-1.5V1745.8a3 3 0 0 1 3-3Z"/><path d="M1920.6 1742.8V1748H1914.7"/><path style="stroke-width:1.3" d="M1925.2 1743V1745.2M1929.2 1743V1745.2M1933.2 1743V1745.2M1915 1752.6H1917.2M1915 1756.6H1917.2M1915 1760.6H1917.2"/>
<path d="M1926.4 1757.2a1 1 0 0 1 1.3-1.2l10.6 3.5a1 1 0 0 1 .1 1.8l-4 1.9a1 1 0 0 0-.5.5l-1.9 3.6a1 1 0 0 1-1.8-.2Z"/></g>
</svg>
<!--TOOLBAR-->

<!-- ============ MENUS ============ -->

<div class="menu" style="left:128px;top:242px;width:400px;height:806px"></div>
<svg style="left:150px;top:270px" width="24" height="24" viewBox="150 270 24 24"><circle class="ic" style="stroke-width:1.7" cx="167.5" cy="281.3" r="6.7"/><path class="ic" style="stroke-width:1.7" d="M172.4 286.2L175.6 289.4"/></svg>
<div class="t" style="left:193px;top:270px;letter-spacing:0.4px">Actions...</div>
<div class="t sc" style="left:399.5px;top:269px;width:100px">⌘K</div>
<div class="sep" style="left:144px;top:322px;width:368px"></div>
<div class="hl" style="left:144px;top:340px;width:368px"></div>
<div class="t" style="left:193px;top:352px;letter-spacing:-0.32px">File</div>
<svg style="left:486.5px;top:354px" width="20" height="20" viewBox="486.5 354 20 20"><path class="ic" style="stroke:#fff;stroke-width:2.2" d="M494.4 359.8L498.6 364L494.4 368.2"/></svg>
<div class="t" style="left:193px;top:400px;letter-spacing:0.06px">Edit</div>
<svg style="left:486.5px;top:402px" width="20" height="20" viewBox="486.5 402 20 20"><path class="ic" style="stroke:#fff;stroke-width:2.2" d="M494.4 407.8L498.6 412L494.4 416.2"/></svg>
<div class="t" style="left:193px;top:448px;letter-spacing:0.53px">View</div>
<svg style="left:486.5px;top:450px" width="20" height="20" viewBox="486.5 450 20 20"><path class="ic" style="stroke:#fff;stroke-width:2.2" d="M494.4 455.8L498.6 460L494.4 464.2"/></svg>
<div class="t" style="left:193px;top:496px;letter-spacing:0.72px">Object</div>
<svg style="left:486.5px;top:498px" width="20" height="20" viewBox="486.5 498 20 20"><path class="ic" style="stroke:#fff;stroke-width:2.2" d="M494.4 503.8L498.6 508L494.4 512.2"/></svg>
<div class="t" style="left:193px;top:544px;letter-spacing:0.88px">Text</div>
<svg style="left:486.5px;top:546px" width="20" height="20" viewBox="486.5 546 20 20"><path class="ic" style="stroke:#fff;stroke-width:2.2" d="M494.4 551.8L498.6 556L494.4 560.2"/></svg>
<div class="t" style="left:193px;top:592px;letter-spacing:0.65px">Arrange</div>
<svg style="left:486.5px;top:594px" width="20" height="20" viewBox="486.5 594 20 20"><path class="ic" style="stroke:#fff;stroke-width:2.2" d="M494.4 599.8L498.6 604L494.4 608.2"/></svg>
<div class="t" style="left:193px;top:640px;letter-spacing:0.98px">Vector</div>
<svg style="left:486.5px;top:642px" width="20" height="20" viewBox="486.5 642 20 20"><path class="ic" style="stroke:#fff;stroke-width:2.2" d="M494.4 647.8L498.6 652L494.4 656.2"/></svg>
<div class="t" style="left:193px;top:722px;letter-spacing:0.31px">Plugins</div>
<svg style="left:486.5px;top:724px" width="20" height="20" viewBox="486.5 724 20 20"><path class="ic" style="stroke:#fff;stroke-width:2.2" d="M494.4 729.8L498.6 734L494.4 738.2"/></svg>
<div class="t" style="left:193px;top:770px;letter-spacing:0.77px">Widgets</div>
<svg style="left:486.5px;top:772px" width="20" height="20" viewBox="486.5 772 20 20"><path class="ic" style="stroke:#fff;stroke-width:2.2" d="M494.4 777.8L498.6 782L494.4 786.2"/></svg>
<div class="t" style="left:193px;top:818px;letter-spacing:0.51px">Preferences</div>
<svg style="left:486.5px;top:820px" width="20" height="20" viewBox="486.5 820 20 20"><path class="ic" style="stroke:#fff;stroke-width:2.2" d="M494.4 825.8L498.6 830L494.4 834.2"/></svg>
<div class="t" style="left:193px;top:866px;letter-spacing:0.53px">Libraries</div>
<div class="t" style="left:193px;top:948px;letter-spacing:0.4px">AI balance</div>
<svg style="left:486.5px;top:950px" width="20" height="20" viewBox="486.5 950 20 20"><path class="ic" style="stroke:#fff;stroke-width:2.2" d="M494.4 955.8L498.6 960L494.4 964.2"/></svg>
<div class="t" style="left:193px;top:996px;letter-spacing:0.69px">Help and account</div>
<svg style="left:486.5px;top:998px" width="20" height="20" viewBox="486.5 998 20 20"><path class="ic" style="stroke:#fff;stroke-width:2.2" d="M494.4 1003.8L498.6 1008L494.4 1012.2"/></svg>
<div class="sep" style="left:144px;top:692px;width:368px"></div>
<div class="sep" style="left:144px;top:918px;width:368px"></div>

<div class="menu" style="left:536px;top:324px;width:433px;height:600px"></div>
<div class="hl" style="left:552px;top:552px;width:401px"></div>
<div class="sep" style="left:552px;top:452px;width:401px"></div>
<div class="sep" style="left:552px;top:534px;width:401px"></div>
<div class="sep" style="left:552px;top:712px;width:401px"></div>
<div class="sep" style="left:552px;top:842px;width:401px"></div>
<div class="t" style="left:600px;top:352px;letter-spacing:0.54px">New Design</div>
<div class="t" style="left:600px;top:400px;letter-spacing:0.84px">New</div>
<svg style="left:927.5px;top:402px" width="20" height="20" viewBox="927.5 402 20 20"><path class="ic" style="stroke:#fff;stroke-width:2.2" d="M935.4 407.8L939.6 412L935.4 416.2"/></svg>
<div class="t" style="left:600px;top:482px;letter-spacing:0.47px">Place image/video...</div>
<div class="t sc" style="left:820.5px;top:481px;width:120px"><span class="u">⇧</span>⌘K</div>
<div class="t" style="left:600px;top:564px;letter-spacing:0.35px">Save local copy...</div>
<div class="t" style="left:600px;top:612px;letter-spacing:0.52px">Save to version history...</div>
<div class="t sc" style="left:820.5px;top:611px;width:120px">⌥⌘S</div>
<div class="t" style="left:600px;top:660px;letter-spacing:0.67px">Show version history</div>
<div class="t" style="left:600px;top:742px;letter-spacing:0.41px">Export...</div>
<div class="t sc" style="left:820.5px;top:741px;width:120px"><span class="u">⇧</span>⌘E</div>
<div class="t" style="left:600px;top:790px;letter-spacing:0.45px">Export frames to PDF...</div>
<div class="t" style="left:600px;top:872px;letter-spacing:0.47px">Create branch...</div>
<!--MENUS-->

</div></div>
<div id="rim"></div>
</body>
</html>
